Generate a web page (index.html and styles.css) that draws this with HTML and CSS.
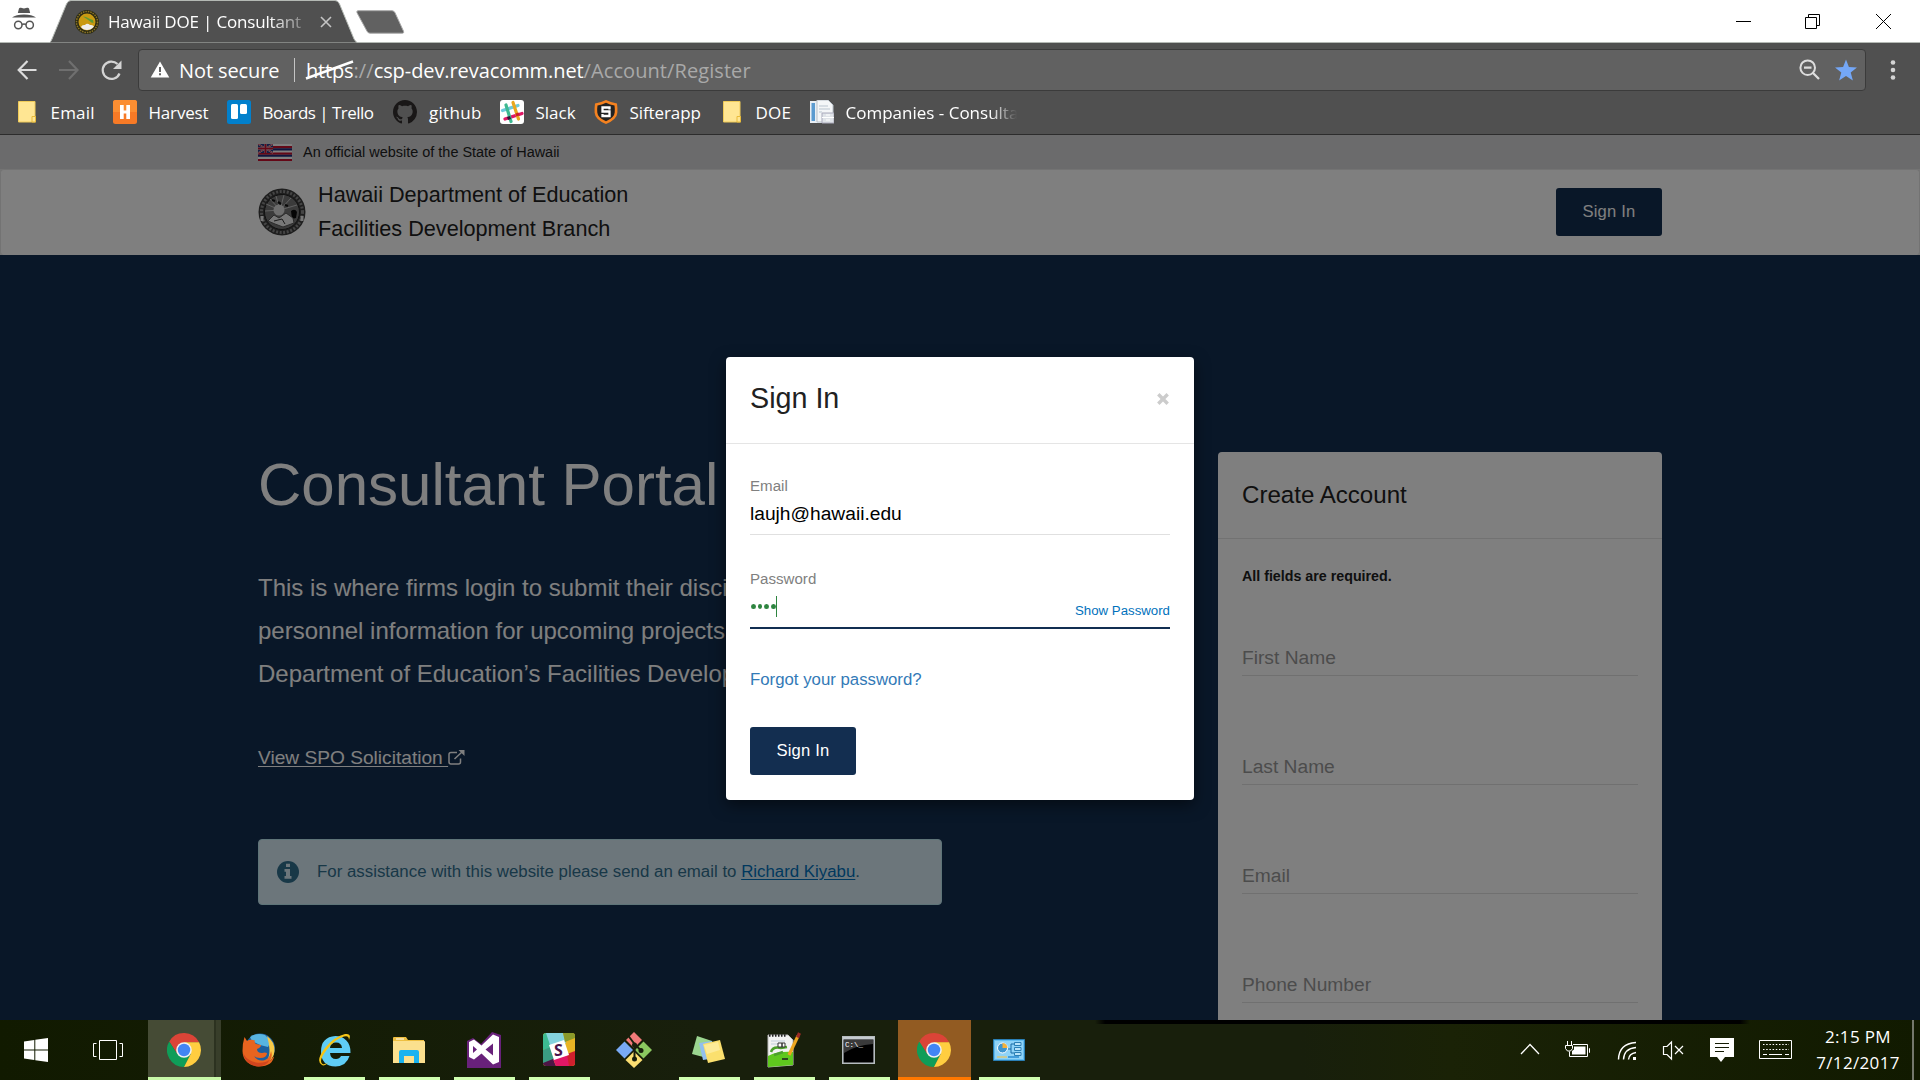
FILE: index.html
```
<!DOCTYPE html>
<html lang="en">
<head>
<meta charset="utf-8">
<title>Hawaii DOE | Consultant Portal</title>
<link rel="stylesheet" href="styles.css">
</head>
<body>
<svg class="defs" width="0" height="0" aria-hidden="true">
  <symbol id="chrome" viewBox="0 0 48 48">
    <path fill="#db4437" d="M24 13 14.5 29.5 3.2 12A24 24 0 0 1 45.3 13Z"/>
    <path fill="#0f9d58" d="M33.5 29.5 24 48A24 24 0 0 1 3.2 12L14.5 29.5Z"/>
    <path fill="#ffcd40" d="M24 13H45.3A24 24 0 0 1 24 48L33.5 29.5Z"/>
    <circle cx="24" cy="24" r="11" fill="#f1f1f1"/><circle cx="24" cy="24" r="8.8" fill="#4285f4"/>
  </symbol>
  <symbol id="folder" viewBox="0 0 18 22">
    <path d="M.5.5h16.5v15.5h.5v5H.5z" fill="#ffe693" stroke="#f0cb58"/><path d="M14 21v-5.500h3.500V21z" fill="#ffe693" stroke="#e8bb3a"/>
  </symbol>
</svg>

<header class="browser">
  <div class="tabstrip">
    <svg class="incognito" width="24" height="24" viewBox="0 0 24 24" fill="#555"><path d="M7 1.500Q7.500.3 9 .8l3 .7 3-.7q1.500-.4 2 .7L18.200 6H5.800zM0 10.500Q4 7.500 12 7.500t12 3z"/><g fill="none" stroke="#555" stroke-width="1.500"><circle cx="6.300" cy="18" r="3.700"/><circle cx="17.700" cy="18" r="3.700"/><path d="M10 17.500q2-1.200 4 0"/></g></svg>
    <div class="tab">
      <svg class="tab-shape" width="310" height="43" viewBox="0 0 310 43"><path d="M0 43Q2 42 3 39L17.500 4Q19 .5 22 .5H286Q289 .5 290.500 4L305 39Q306.500 42 309 43Z" fill="#505050" stroke="#b4b9b4"/></svg>
      <svg class="favicon" width="24" height="24" viewBox="0 0 24 24"><circle cx="12" cy="12" r="12" fill="#2b2a14"/><circle cx="12" cy="12" r="10.500" fill="none" stroke="#8b7426" stroke-width="1.500" stroke-dasharray="1.500 1"/><circle cx="12" cy="12" r="8.500" fill="#c99a12"/><path d="M8 6.500l3 .5 4 2 3 1 .5 3-2-.5-4-3z" fill="#5d9a35"/><path d="M6 17q1-2.500 4-2 2-2.500 5 0 3-.5 4 1.500-3 3.500-7 3.500Q8 20 6 17z" fill="#eee"/></svg>
      <span class="tab-title">Hawaii DOE | Consultant</span>
      <svg class="tab-close" width="12" height="12" viewBox="0 0 12 12" stroke="#c4c4c4" stroke-width="1.600"><path d="M1 1l10 10M11 1L1 11"/></svg>
    </div>
    <svg class="newtab" width="50" height="24" viewBox="0 0 50 24"><path d="M2 .7h34q2 0 3 2l8.500 18.500q.8 2-1 2H14q-2 0-3-2L1 2.700Q.3.700 2 .7z" fill="#616161" stroke="#a8a8a8"/></svg>
    <svg class="winctl" width="160" height="20" viewBox="0 0 160 20" fill="none" stroke="#000"><path d="M1 10.500h15"/><path d="M70.500 6.500h11v11h-11zM73.500 6.500v-3h11v11h-3"/><path d="M141 3l15 15M156 3L141 18"/></svg>
  </div>

  <div class="toolbar">
    <svg class="nav" width="120" height="24" viewBox="0 0 120 24" fill="none" stroke-width="2.200"><path stroke="#dcdcdc" d="M19.500 12H2M10.500 3L1.700 12l8.800 9"/><path stroke="#6f6f6f" d="M42 12h18M52 3l8.500 9-8.500 9"/><path stroke="#d4d4d4" stroke-width="2.200" d="M102.500 15.500A8.700 8.700 0 1 1 100.500 6"/><path fill="#d4d4d4" d="M104.500 2.500v8.500H96z"/></svg>
    <div class="omnibox">
      <svg width="20" height="17" viewBox="0 0 20 17"><path d="M10 .5L19.300 16.500H.7z" fill="#fff"/><path d="M9 6h2v5H9zM9 12.300h2v2H9z" fill="#616161"/></svg>
      <span class="notsecure">Not secure</span>
      <span class="sep"></span>
      <span class="url"><span class="scheme">https<svg class="strike" width="50" height="20" viewBox="0 0 50 20"><path d="M1 18.500L48 1.500" stroke="#fff" stroke-width="2.400"/></svg></span><span class="dim">://</span><span class="host">csp-dev.revacomm.net</span><span class="dim">/Account/Register</span></span>
      <svg class="omni-icons" width="60" height="24" viewBox="0 0 60 24"><circle cx="9.700" cy="9.700" r="7.300" fill="none" stroke="#ddd" stroke-width="2"/><path d="M6 9.700h7.500M14.500 14.500l6.500 6.500" stroke="#ddd" stroke-width="2.300" fill="none"/><path fill="#74a7f7" d="M48 1.500l2.900 7.500 8.100.5-6.300 5 2.200 8L48 18l-6.900 4.500 2.200-8-6.300-5 8.100-.5z"/></svg>
    </div>
    <svg width="6" height="22" viewBox="0 0 6 22" fill="#d4d4d4"><circle cx="3" cy="3.500" r="2.300"/><circle cx="3" cy="11" r="2.300"/><circle cx="3" cy="18.500" r="2.300"/></svg>
  </div>

  <nav class="bookmarks">
    <a class="bm bm-email"><svg width="18" height="22"><use href="#folder"/></svg>Email</a>
    <a class="bm bm-harvest"><svg width="24" height="24" viewBox="0 0 24 24"><rect width="24" height="24" rx="2.500" fill="#f77a26"/><path d="M0 12V2.500Q0 0 2.500 0h19Q24 0 24 2.500V12z" fill="#fb8e32"/><path d="M7 5h3.700v5.500h2.600V5H17v14h-3.700v-5.500h-2.600V19H7z" fill="#fff"/></svg>Harvest</a>
    <a class="bm bm-trello"><svg width="24" height="24" viewBox="0 0 24 24"><rect width="24" height="24" rx="2.500" fill="#0280cc"/><rect x="4" y="4" width="7" height="15" rx="1.500" fill="#fff"/><rect x="13" y="4" width="7" height="10" rx="1.500" fill="#fff"/></svg>Boards | Trello</a>
    <a class="bm bm-github"><svg width="24" height="24" viewBox="0 0 16 16"><path fill="#191717" d="M8 0C3.580 0 0 3.580 0 8c0 3.540 2.290 6.530 5.470 7.590.4.070.55-.17.55-.38 0-.19-.01-.82-.01-1.490-2.010.37-2.530-.49-2.690-.94-.09-.23-.48-.94-.82-1.130-.28-.15-.68-.52-.01-.53.63-.01 1.080.58 1.230.82.72 1.210 1.870.87 2.330.66.07-.52.28-.87.51-1.070-1.780-.2-3.640-.89-3.640-3.950 0-.87.31-1.590.82-2.150-.08-.2-.36-1.020.08-2.120 0 0 .67-.21 2.200.82.64-.18 1.320-.27 2-.27s1.360.09 2 .27c1.530-1.040 2.200-.82 2.200-.82.44 1.100.16 1.920.08 2.120.51.56.82 1.270.82 2.150 0 3.070-1.870 3.750-3.650 3.950.29.25.54.73.54 1.480 0 1.070-.01 1.930-.01 2.200 0 .21.150.46.55.38A8.010 8.010 0 0 0 16 8c0-4.420-3.580-8-8-8z"/></svg>github</a>
    <a class="bm bm-slack"><svg width="24" height="24" viewBox="0 0 24 24"><rect width="24" height="24" rx="3" fill="#fff"/><g stroke-width="3.200" stroke-linecap="round"><path stroke="#6ecadc" d="M2.500 10.500L18 5.500"/><path stroke="#e01765" d="M5 19l17-5.500"/><path stroke="#3eb991" d="M6 5l5 16.500"/><path stroke="#e9a820" d="M13 2.500L18.500 19"/></g><path d="M7 17l3-1 1 3-3 1z" fill="#361238"/><path d="M15.500 13.500l3-1 .9 3-3 1z" fill="#cc2027"/></svg>Slack</a>
    <a class="bm bm-sifter"><svg width="24" height="24" viewBox="0 0 24 24"><path d="M12 0q5 2.500 11 3.500.6 4 .4 9-.4 7-11.400 11.500Q1 19.500.6 12.500.4 7.500 1 3.500 7 2.500 12 0z" fill="#f58220"/><path d="M12 2.800q4 2 8.500 2.800.5 3 .2 7Q20.300 18 12 21.300 3.700 18 3.300 12.600 3 8.500 3.500 5.600 8 4.800 12 2.800z" fill="#222"/><path d="M15.500 9.500V7.500h-7v4h7v4.500h-7V14" fill="none" stroke="#fff" stroke-width="2.300"/></svg>Sifterapp</a>
    <a class="bm bm-doe"><svg width="18" height="22"><use href="#folder"/></svg>DOE</a>
    <a class="bm bm-companies"><svg width="24" height="24" viewBox="0 0 24 24"><path d="M0 1h16v22H0z" fill="#e8eef4"/><path d="M1.500 3h3.500v18H1.500z" fill="#5b9bd0"/><path d="M7 0h11l5 5v17H7z" fill="#f4f6f8" stroke="#b8c0c8"/><path d="M9 6h9M9 9h11M9 12h3" stroke="#b9c4cf"/><path d="M12 13h12v10H12z" fill="#dfe3e8" stroke="#aab"/><path d="M12 17.500h12M16 15h4M16 20h4" stroke="#fff"/></svg><span class="fade">Companies - Consulta</span></a>
  </nav>
</header>

<main class="viewport">
  <div class="gov-banner"><div class="container">
    <svg class="flag" width="34" height="17" viewBox="0 0 34 17"><path fill="#fff" d="M0 0h34v17H0z"/><path fill="#c8102e" d="M0 2.100h34v2.200H0zM0 8.500h34v2.200H0zM0 14.900h34V17H0z"/><path fill="#1f2c7c" d="M0 4.300h34v2.100H0zM0 10.700h34v2.100H0z"/><path fill="#2a3b86" d="M0 0h15v9H0z"/><path d="M0 0l15 9M15 0L0 9" stroke="#fff" stroke-width="1.500"/><path d="M0 0l15 9M15 0L0 9" stroke="#c8102e" stroke-width=".8"/><path d="M7.500 0v9M0 4.500h15" stroke="#e9a9b4" stroke-width="2.400"/><path d="M7.500 0v9M0 4.500h15" stroke="#c8102e" stroke-width="1.500"/></svg>
    <span>An official website of the State of Hawaii</span>
  </div></div>

  <div class="masthead"><div class="container">
    <svg class="seal" width="48" height="48" viewBox="0 0 48 48"><circle cx="24" cy="24" r="23.500" fill="#3c3c3c"/><circle cx="24" cy="24" r="20.500" fill="none" stroke="#8a8a8a" stroke-width="3" stroke-dasharray="2 1.600"/><circle cx="24" cy="24" r="17.500" fill="#777" stroke="#222"/><g stroke="#ccc" stroke-width=".9"><path d="M22 22L8 16M22 22L12 11M22 22L18 8M22 22L26 7M22 22L33 10M22 22L39 17M22 22L7 23"/></g><circle cx="21" cy="22" r="5.500" fill="#ddd"/><path d="M14 12l3 1M20 14l3 2M27 17l3 1" fill="none" stroke="#111" stroke-width="2.200"/><path d="M33 23q4-3 6 1l-1 6-4 1z" fill="#0a0a0a"/><path d="M10 33l6-6 5 3 7-5 7 5 1 5-11 4-8-3z" fill="#eee" stroke="#555"/><path d="M16 33l8-2 3 5" fill="none" stroke="#333"/><path d="M2.500 28h3v5h-3zM42.500 28h3v5h-3z" fill="#eee"/></svg>
    <div class="brand">Hawaii Department of Education<br>Facilities Development Branch</div>
    <a class="btn">Sign In</a>
  </div></div>

  <div class="hero"><div class="container">
    <section class="intro">
      <h1>Consultant Portal</h1>
      <p>This is where firms login to submit their discipline and<br>personnel information for upcoming projects with the<br>Department of Education’s Facilities Development Branch.</p>
      <a class="spo"><span>View SPO Solicitation </span><svg width="17" height="15" viewBox="0 0 17 15" fill="none" stroke="#fff" stroke-width="1.500"><path d="M9 2.500H3Q1 2.500 1 4.500V12Q1 14 3 14h7.500q2 0 2-2V8.500M6.500 9L14 2"/><path d="M10.500 0H16.500V6z" fill="#fff" stroke="none"/></svg></a>
      <div class="alert">
        <svg width="22" height="22" viewBox="0 0 22 22"><circle cx="11" cy="11" r="11" fill="#31708f"/><path fill="#d9edf7" d="M9 2.800h4v3.200H9zM7.500 8H13v7h1.500v2.800h-7V15H9v-4.300H7.500z"/></svg>
        <span>For assistance with this website please send an email to <a>Richard Kiyabu</a>.</span>
      </div>
    </section>
    <section class="card">
      <h2>Create Account</h2>
      <div class="card-body">
        <strong>All fields are required.</strong>
        <div class="fields"><label>First Name</label><label>Last Name</label><label>Email</label><label>Phone Number</label></div>
      </div>
    </section>
  </div></div>

  <div class="backdrop">
    <div class="modal">
      <div class="modal-head"><span>Sign In</span><svg width="12" height="12" viewBox="0 0 12 12" stroke="#ccc" stroke-width="3.400"><path d="M1.300 1.300l9.400 9.400M10.700 1.300l-9.400 9.400"/></svg></div>
      <div class="modal-body">
        <div class="label">Email</div>
        <div class="value">laujh@hawaii.edu</div>
        <div class="label">Password</div>
        <div class="value focus"><span class="dots"><i></i><i></i><i></i><i></i></span><span class="caret"></span><a class="show">Show Password</a></div>
        <a class="forgot">Forgot your password?</a>
        <a class="btn">Sign In</a>
      </div>
    </div>
  </div>
</main>

<footer class="taskbar">
  <div class="slot start"><svg width="24" height="24" viewBox="0 0 24 24" fill="#fff"><path d="M0 3.400L10.300 2v9.500H0zM11.300 1.800L24 0v11.500H11.300zM0 12.500h10.300V22L0 20.600zM11.300 12.500H24V24l-12.700-1.800z"/></svg></div>
  <div class="slot view"><svg width="30" height="20" viewBox="0 0 30 20" fill="none" stroke="#fff"><path d="M6.500.5h17v19h-17zM3.500 3.500H.5v13h3M26.500 3.500h3v13h-3"/></svg></div>
  <div class="slot active"><svg width="34" height="34"><use href="#chrome"/></svg></div>
  <div class="slot"><svg width="34" height="34" viewBox="0 0 34 34"><circle cx="18" cy="15.500" r="15" fill="#1c5f9e"/><path d="M8 4Q15-1 23 2l6 6-3 6-8-2-8-4z" fill="#58b4e0"/><path d="M25 3q8 6 7.500 15T22 32q6-7 5.500-15Q27 9 25 3z" fill="#f7c948"/><path d="M2.500 4l2.500 4Q8 6 13 7.500q-1 2 1 3.500l5 1q0 2.500-4 4 0 4 5 4 3-1 5 0 0 5-7 5-4 0-6-2 4 6 11 4 5-2 6-9 2 5-1 10l4-5Q31 33 17 33.500 1 32 .5 18 .5 10 2.500 4z" fill="#e8641f"/><path d="M1 20q4 8 13 9.500 9 1 14-3-4 7-12 7Q3 32 1 20z" fill="#d2451e"/></svg></div>
  <div class="slot run"><svg width="34" height="34" viewBox="0 0 34 34"><path fill="#5fcdf5" fill-rule="evenodd" d="M18.500 3C27 3 34 9 33.500 20H13q.5 6 6 6 3.500 0 5-3h8.500q-3 10-14 10.500Q4 33 4 18.500 4 4 18.500 3zM13 15h12q-.5-5.500-6-5.500T13 15z"/><path d="M5 32Q-2 28 8 15 18 3 28 1q7-1 4 6 0-5-5-3.500Q18 6 10 16.500 1 28 5.500 31q2 1 6-1.500Q7 33.500 5 32z" fill="#f5c518"/></svg></div>
  <div class="slot run"><svg width="34" height="28" viewBox="0 0 34 28"><path d="M1 2q0-1 1-1h12l2 3h16v23H1z" fill="#eebf41"/><path d="M1 5h31q1 0 1 1v21H1z" fill="#fbe08e"/><path d="M4 3h8" stroke="#fff"/><path d="M7 27V16q0-2 2-2h16q2 0 2 2v11h-5v-7H12v7z" fill="#19b3ef"/></svg></div>
  <div class="slot run"><svg width="34" height="36" viewBox="0 0 34 36"><path d="M0 9l6-3 8 6L25 0l9 3v33H0z" fill="#68217a"/><path fill="#fff" fill-rule="evenodd" d="M2 10l5-2.500 7.500 6L26 2.500l6 2.500v25l-6 2.500-11.500-11-7.500 6L2 25zM6 14v7l4-3.500zM18.500 17.500L26 23.500v-12z"/></svg></div>
  <div class="slot run"><svg width="32" height="33" viewBox="0 0 32 33"><rect width="32" height="33" rx="3" fill="#e8b424"/><path d="M0 3q0-3 3-3h9l5 13L0 17z" fill="#3cba91"/><path d="M3 0h17l3 10-15 5z" fill="#84d3dd"/><path d="M20 0h9q3 0 3 3v2L22 9z" fill="#8a9a2a"/><path d="M0 17l8-3 5 13-13 4z" fill="#3a9c83"/><path d="M0 30l10-4 3 7H3q-3 0-3-3z" fill="#4c1545"/><path d="M10 26l15-5 3 12H13z" fill="#e01765"/><path d="M24 21l8-3v12q0 3-3 3h-3z" fill="#d0202d"/><path d="M6 12l15-5 5 15-15 5z" fill="#fff"/><text x="11" y="23" font-family="Open Sans" font-weight="700" font-size="16" fill="#4a154b">S</text></svg></div>
  <div class="slot"><svg width="36" height="36" viewBox="0 0 36 36"><path d="M18 0l8 8-8 8-8-8z" fill="#f27a79"/><path d="M8.500 9.500l8.500 8.500-8.500 8.500L0 18z" fill="#79aaf5"/><path d="M27.500 9.500L36 18l-8.500 8.500L19 18z" fill="#8bc860"/><path d="M18 19.500l8.500 8.500-8.500 8-8.500-8z" fill="#fbdf72"/><path d="M12.500 4l6 8v15M18.500 12l6 6" fill="none" stroke="#181f0c" stroke-width="2"/><circle cx="18.500" cy="13" r="2.500" fill="#181f0c"/><circle cx="25" cy="18.500" r="2.500" fill="#181f0c"/><circle cx="18.500" cy="27" r="2.500" fill="#181f0c"/></svg></div>
  <div class="slot run"><svg width="36" height="30" viewBox="0 0 36 30"><path d="M6 1l15 5-5 17-15-4z" fill="#9bd590"/><path d="M8 8l13-2 4 17-13 2z" fill="#92bfee"/><path d="M12 9l17-4 5 19-17 4z" fill="#fbe06e"/><path d="M13 10l14-3 2 8-13 4z" fill="#fdeb98"/></svg></div>
  <div class="slot run"><svg width="36" height="36" viewBox="0 0 36 36"><path d="M2 3h20l5 5v25L2 35z" fill="#f2f2f2" stroke="#bbb"/><path d="M2 24q10-5 25-4v13L2 35z" fill="#5fc71e"/><path d="M3 3.500h18" stroke="#222" stroke-width="2.500" stroke-dasharray="1.500 1.500"/><path d="M5 9h14M5 12h7" stroke="#c2cfdc"/><path d="M5 20q2-6 10-4l6-1M8 23l9-3" stroke="#4c9f2b" stroke-width="2.600" fill="none"/><path d="M12 11h4v4h-4zM16 11h3v4h-3z" fill="#fff" stroke="#333"/><path d="M16 27h6" stroke="#222" stroke-width="1.600"/><path d="M32 4L23 23" stroke="#eda620" stroke-width="3.200"/><path d="M33.500 1l-2 4.500" stroke="#9c2b25" stroke-width="3.200"/></svg></div>
  <div class="slot run"><svg width="33" height="28" viewBox="0 0 33 28"><path d="M.8.8h31.400v26.400H.8z" fill="#000" stroke="#b6bcc0" stroke-width="1.600"/><path d="M1 1h31v2.500H1z" fill="#c5cbd0"/><path d="M2 4h29v4Q14 9 2 17z" fill="#3a3a3a"/><text x="3" y="11" font-family="Liberation Mono" font-size="7.500" fill="#fff">C:\_</text></svg></div>
  <div class="slot hot"><svg width="34" height="34"><use href="#chrome"/></svg></div>
  <div class="slot run"><svg width="32" height="22" viewBox="0 0 32 22"><path d="M.5.5h31v21H.5z" fill="#63bdf0" stroke="#2a7fb5"/><path d="M2 2h28v18H2z" fill="#8fd3f7"/><circle cx="9.500" cy="9" r="5" fill="#3e95cf" stroke="#fff"/><path d="M9.500 9V4a5 5 0 0 1 5 5z" fill="#f4b13b"/><path d="M15 10h3V5h3M18 10v4h3" fill="none" stroke="#176ba5"/><path d="M21.500 3.500h6.500v3h-6.500zM21.500 8.500h6.500v3h-6.500zM21.500 13.500h6.500v3h-6.500z" fill="#b8e2f8" stroke="#2a7fb5"/><path d="M4 18h10" stroke="#d7c77b" stroke-width="1.500"/><path d="M15 18h11" stroke="#2a8bd0" stroke-width="1.500"/></svg></div>
  <div class="tray">
    <svg width="275" height="30" viewBox="0 0 275 30" fill="none" stroke="#fff">
      <path d="M1 19l9-9.500 9 9.500" stroke-width="1.300"/>
      <path d="M53 9.500h14.500v12H49.500v-5M69 13.500h.5v4h-.5M47.500 6v4M51.500 6v4M45.500 10.500h7v3l-2 2.500h-3l-2-2.500z"/><path d="M52 16v3.500h13.500v-8H54v3z" fill="#fff" stroke="none"/>
      <path d="M98.500 24.500Q99 8.500 116 7.500M103.500 24.500Q104 13.500 116 12.500M108.500 24.500Q109 18.500 116 17.500" stroke-width="1.400"/><path d="M113 22h3v3h-3z" fill="#fff" stroke="none"/>
      <path d="M143.500 11.500h3.500l4.500-4.500v17l-4.500-4.500h-3.500zM155 11l8 8M163 11l-8 8" stroke-width="1.200"/>
      <path d="M190 3h24v19h-9l-4 5-4-5h-7z" fill="#fff" stroke="none"/><path d="M195 8.500h14M195 12.500h14M195 16.500h9" stroke="#141b04"/>
      <path d="M239.500 5.500h32v18h-32z"/><path d="M243 9.500h26M243 14.500h26" stroke-dasharray="1.500 1.700"/><path d="M243 19.500h4M249 19.500h13M265 19.500h4"/>
    </svg>
    <div class="clock">2:15 PM<br>7/12/2017</div>
    <div class="peek"></div>
  </div>
</footer>
</body>
</html>
```
FILE: styles.css
```
* { box-sizing: border-box; }
body { margin: 0; width: 1920px; height: 1080px; overflow: hidden; display: flex; flex-direction: column; font-family: "Liberation Sans", Arial, sans-serif; }
svg { display: block; flex: none; }
.defs { position: absolute; }
h1, h2, p { margin: 0; font-weight: 400; }

/* browser window */
.browser { height: 135px; flex: none; background: #505050; border-bottom: 1px solid #2c2c2c; font-family: "Open Sans", "Noto Sans", sans-serif; color: #fff; font-size: 17px; }
.tabstrip { height: 43px; background: #fff; border-bottom: 1px solid #b4b9b4; display: flex; align-items: center; }
.incognito { margin: -5px 0 0 12px; }
.tab { position: relative; width: 310px; height: 43px; margin: 1px 0 0 13px; padding: 0 0 1px 26px; display: flex; align-items: center; }
.tab-shape { position: absolute; left: 0; top: 0; }
.favicon, .tab-title, .tab-close { position: relative; }
.favicon, .tab-close { margin-top: 2px; }
.tab-title { width: 194px; margin-left: 9px; white-space: nowrap; overflow: hidden; letter-spacing: -.18px; -webkit-mask-image: linear-gradient(90deg, #000 83%, rgba(0,0,0,.3)); mask-image: linear-gradient(90deg, #000 83%, rgba(0,0,0,.3)); }
.tab-close { margin-left: 18px; }
.newtab { margin: 2px 0 0 -3px; }
.winctl { margin-left: auto; margin-right: 25px; }
.toolbar { height: 47px; padding: 0 24px 0 17px; display: flex; align-items: center; }
.nav { margin-top: 7px; }
.toolbar > svg:last-child { margin: 7px 0 0 24px; }
.omnibox { width: 1728px; height: 42px; margin: 6px 0 0 1px; padding: 0 7px 0 11px; display: flex; align-items: center; background: #616161; border: 1px solid #3b3b3b; border-radius: 4px; font-size: 20px; white-space: nowrap; }
.notsecure { width: 103px; margin: 1px 0 0 9px; letter-spacing: -.1px; }
.sep { width: 1px; height: 24px; margin: 0 11px 0 12px; background: #c4c4c4; }
.url { display: flex; margin-top: 1px; }
.scheme { position: relative; width: 47.500px; letter-spacing: -.2px; }
.strike { position: absolute; left: -1px; top: 3px; }
.url .dim { color: #a9a9a9; letter-spacing: .08px; }
.host { letter-spacing: -.08px; }
.omni-icons { margin: 1px 0 0 auto; }
.bookmarks { height: 44px; padding-left: 18px; display: flex; align-items: center; }
.bm { display: flex; align-items: center; white-space: nowrap; }
.bm svg { margin-right: 11.500px; }
.bm-email { width: 95px; letter-spacing: .2px; }
.bm-email svg, .bm-doe svg { margin-right: 14.500px; }
.bm-harvest { width: 114px; letter-spacing: -.18px; }
.bm-trello { width: 166px; letter-spacing: -.53px; }
.bm-github { width: 107px; letter-spacing: .3px; }
.bm-github svg { margin-right: 12px; }
.bm-slack { width: 94px; }
.bm-sifter { width: 129px; letter-spacing: -.1px; }
.bm-doe { width: 87px; letter-spacing: .2px; }
.fade { width: 171px; overflow: hidden; -webkit-mask-image: linear-gradient(90deg, #000 84%, transparent); mask-image: linear-gradient(90deg, #000 84%, transparent); }

/* page */
.viewport { position: relative; height: 885px; flex: none; overflow: hidden; background: #e9e9e9; color: #212121; }
.container { width: 1404px; margin: 0 auto; display: flex; }
.gov-banner { height: 34px; background: #d6d7d9; }
.gov-banner .container { height: 34px; align-items: center; gap: 11px; font-size: 14.450px; }
.masthead { height: 86px; background: #fff; border: 1px solid #e7e7e7; border-bottom: 0; border-radius: 4px; }
.masthead .container { height: 85px; align-items: center; }
.seal { margin-top: -2px; }
.brand { margin: -2px 0 0 12px; font-size: 21.650px; line-height: 34px; }
.btn { display: block; width: 106px; height: 48px; background: #132e50; border-radius: 3px; color: #fff; font-size: 16.6px; line-height: 48px; letter-spacing: .2px; text-align: center; }
.masthead .btn { margin: -2px 0 0 auto; }
.hero { height: 765px; padding-top: 197px; background: #132e50; }
.hero .container { justify-content: space-between; align-items: flex-start; }
.intro { width: 684px; color: #fff; }
.intro h1 { font-size: 60px; line-height: 65px; }
.intro p { margin-top: 49px; font-size: 24px; line-height: 43px; white-space: nowrap; }
.spo { display: flex; align-items: center; margin-top: 49px; height: 27px; font-size: 19.150px; line-height: 27px; }
.spo span { white-space: pre; text-decoration: underline; text-underline-offset: 2px; text-decoration-thickness: 1px; }
.spo svg { margin-left: -.500px; }
.alert { height: 66px; margin-top: 68px; padding-left: 18px; display: flex; align-items: center; gap: 18px; background: #d9edf7; border: 1px solid #bce8f1; border-radius: 4px; color: #31708f; font-size: 16.850px; }
.alert span { white-space: nowrap; }
.alert a { color: #0071bc; text-decoration: underline; text-underline-offset: 2px; }
.card { width: 444px; height: 620px; background: #fff; border-radius: 4px; }
.card h2 { height: 87px; padding-left: 24px; border-bottom: 1px solid #e5e5e5; font-size: 24.100px; line-height: 86px; }
.card-body { padding: 27px 24px 0; }
.card strong { display: block; font-size: 14.250px; line-height: 20px; }
.fields { margin-top: 59px; display: grid; gap: 78px; }
.fields label { height: 31px; border-bottom: 1px solid #e0e0e0; font-size: 19.200px; line-height: 25px; color: #999; }

/* sign-in dialog */
.backdrop { position: absolute; inset: 0; padding-top: 222px; background: rgba(0,0,0,.5); }
.modal { width: 468px; height: 443px; margin: 0 auto; background: #fff; border-radius: 4px; box-shadow: 0 5px 15px rgba(0,0,0,.5); }
.modal-head { height: 87px; padding: 0 25px 4px 24px; display: flex; align-items: center; justify-content: space-between; border-bottom: 1px solid #e5e5e5; font-size: 28.700px; }
.modal-head svg { margin-top: 2px; }
.modal-body { padding: 32px 24px 0; }
.label { font-size: 15.100px; line-height: 20px; color: #808080; }
.value { margin: 5px 0 34px; height: 34px; border-bottom: 1px solid #e0e0e0; font-size: 19.200px; line-height: 26px; color: #000; }
.value.focus { display: flex; height: 35px; margin-bottom: 38px; border-bottom: 2px solid #112e51; }
.dots { display: flex; gap: 2px; padding: 10px 0 0 1px; }
.dots i { width: 4.700px; height: 5px; border-radius: 50%; background: #2e8540; }
.caret { width: 1px; height: 21px; margin-top: 2px; background: #2e8540; }
.show { margin: 7px 0 0 auto; font-size: 13.250px; line-height: 20px; color: #0071bc; }
.forgot { display: block; margin-bottom: 36px; font-size: 16.800px; line-height: 24px; padding-top: 1px; height: 24px; color: #337ab7; }

/* taskbar */
.taskbar { height: 60px; flex: none; display: flex; background: linear-gradient(90deg, transparent 1095px, #000 1105px, #000 1740px, transparent 1750px) 0 0 / 100% 4px no-repeat, linear-gradient(90deg, #111a00 0, #181f0c 700px, #181f0c 1300px, #1a2206 1450px, #111a00 1920px); }
.slot { width: 61px; margin-right: 14px; padding-right: 2px; display: flex; align-items: center; justify-content: center; border-bottom: 3px solid transparent; }
.slot svg { margin-top: 2px; }
.slot.start { width: 72px; margin: 0; padding: 0; }
.slot.view { width: 72px; margin: 0 4px 0 0; padding: 0; }
.slot.active { width: 73px; margin-right: 8px; background: linear-gradient(90deg, #454b35 66px, #2c3220 66px, #2c3220 68px, #383e2a 68px); border-color: #c8f8a8; }
.slot.run { border-color: #d0ffb0; }
.slot.hot { width: 73px; margin: 0 8px 0 -6px; background: #925b22; border-color: #ff7800; }
.tray { margin-left: auto; display: flex; align-items: center; }
.clock { width: 92px; margin: -1px 8px 0 17px; font: 17px/26px "Open Sans", "Noto Sans", sans-serif; letter-spacing: .35px; color: #fff; text-align: center; }
.peek { width: 8px; height: 60px; border-left: 2px solid #74786b; }
```
